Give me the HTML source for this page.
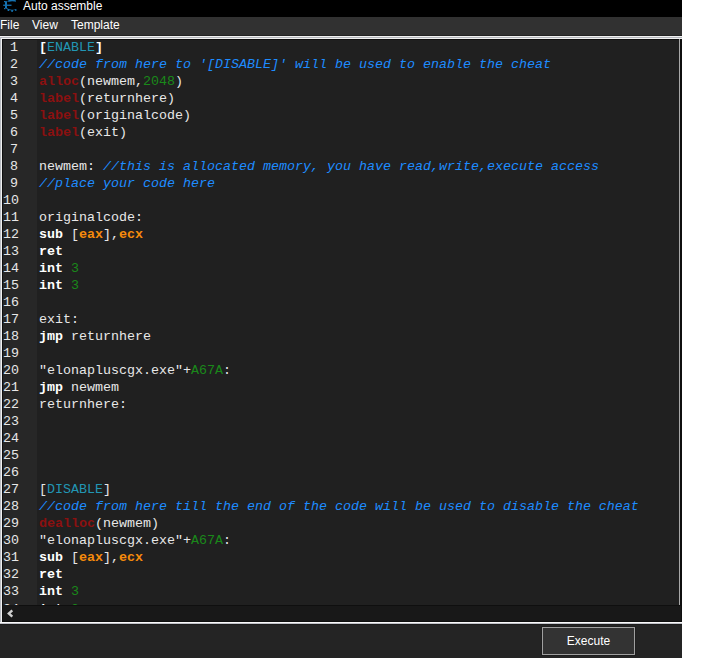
<!DOCTYPE html>
<html><head><meta charset="utf-8">
<style>
*{margin:0;padding:0;box-sizing:border-box}
html,body{width:705px;height:658px;overflow:hidden;background:#fff}
body{position:relative;font-family:"Liberation Sans",sans-serif}
.a{position:absolute}
#title{left:0;top:0;width:682px;height:17px;background:#000;color:#fff;font-size:12px}
#title span{position:absolute;left:23px;top:-1px;line-height:14px}
#icon{position:absolute;left:0;top:0;width:20px;height:16px}
#menu{left:0;top:17px;width:682px;height:19px;background:#313131;color:#fff;font-size:12px}
#menu span{position:absolute;top:1px;line-height:15px}
#edit{left:3px;top:40px;width:676px;height:565px;background:#202020;overflow:hidden}
#gutter{position:absolute;left:0;top:0;width:34px;height:100%;background:#272727}
.mono{font-family:"Liberation Mono",monospace;font-size:13.333px;line-height:17px;white-space:pre}
#nums{position:absolute;left:0;width:15px;top:-1px;color:#e8e8e8;text-align:right}
#code{position:absolute;left:36px;top:-1px;color:#e8e8e8}
#bottom{left:0;top:624px;width:682px;height:34px;background:#242424}
#btn{left:542px;top:627px;width:93px;height:28px;border:1px solid #a0a0a0;background:#333;color:#fff;font-size:12px;text-align:center;line-height:26px}
.b{font-weight:bold;color:#fff}
.bb{font-weight:bold;color:#fff}
.k{font-weight:bold;color:#8b1010}
.c{font-style:italic;color:#1e8cff}
.s{color:#2296b4}
.n{color:#1a881a}
.r{font-weight:bold;color:#f58a0c}
</style></head><body>
<div id="title" class="a"><svg id="icon" viewBox="0 0 20 16">
<g fill="#1572b0">
<path d="M7 1.5 Q8 0 11 -0.5 L15.5 -0.5 L16 1.8 L14.6 1.6 Q12 0.6 9 1.8 Z"/>
<rect x="5" y="1.2" width="2" height="7"/>
<rect x="3.2" y="4.6" width="8.3" height="1.3"/>
<rect x="4" y="1" width="1.5" height="1.2"/>
<rect x="4" y="8" width="1.5" height="1.2"/>
<path d="M6 7.6 Q9 9.8 12 9.8 Q14.3 9.8 15.5 8.9 L15.8 9.5 Q14 10.5 12 10.5 Q8.5 10.5 6 8.6 Z"/>
<rect x="7.6" y="9.2" width="1.6" height="1.8"/>
<rect x="11.3" y="10" width="1.6" height="1.9"/>
<rect x="15" y="9.2" width="1.5" height="1.6"/>
</g></svg><span>Auto assemble</span></div>
<div id="menu" class="a"><span style="left:0">File</span><span style="left:32px">View</span><span style="left:71px">Template</span></div>
<div class="a" style="left:0;top:35px;width:682px;height:1px;background:#232323"></div>
<div class="a" style="left:0;top:36px;width:682px;height:588px;background:#f0f0f0"></div>
<div class="a" style="left:0;top:37px;width:682px;height:1px;background:#b4b6bc"></div>
<div class="a" style="left:0;top:37px;width:1px;height:585px;background:#b9bcc2"></div>
<div class="a" style="left:2px;top:39px;width:680px;height:583px;background:#0f0f0f"></div>
<div id="edit" class="a"><div id="gutter"></div>
<div id="nums" class="mono">1
2
3
4
5
6
7
8
9
10
11
12
13
14
15
16
17
18
19
20
21
22
23
24
25
26
27
28
29
30
31
32
33
<span style="position:relative;top:1px">34</span></div><div id="code" class="mono"><span class="bb">[</span><span class="s">ENABLE</span><span class="bb">]</span>
<span class="c">//code from here to '[DISABLE]' will be used to enable the cheat</span>
<span class="k">alloc</span>(newmem,<span class="n">2048</span>)
<span class="k">label</span>(returnhere)
<span class="k">label</span>(originalcode)
<span class="k">label</span>(exit)

newmem: <span class="c">//this is allocated memory, you have read,write,execute access</span>
<span class="c">//place your code here</span>

originalcode:
<span class="b">sub</span> [<span class="r">eax</span>],<span class="r">ecx</span>
<span class="b">ret</span>
<span class="b">int</span> <span class="n">3</span>
<span class="b">int</span> <span class="n">3</span>

exit:
<span class="b">jmp</span> returnhere

"elonapluscgx.exe"+<span class="n">A67A</span>:
<span class="b">jmp</span> newmem
returnhere:




[<span class="s">DISABLE</span>]
<span class="c">//code from here till the end of the code will be used to disable the cheat</span>
<span class="k">dealloc</span>(newmem)
"elonapluscgx.exe"+<span class="n">A67A</span>:
<span class="b">sub</span> [<span class="r">eax</span>],<span class="r">ecx</span>
<span class="b">ret</span>
<span class="b">int</span> <span class="n">3</span>
<span style="position:relative;top:1px"><span class="b">int</span> <span class="n">3</span></span></div>
</div>
<div class="a" style="left:679px;top:39px;width:1px;height:566px;background:#a8a8a8"></div>
<div class="a" style="left:3px;top:605px;width:16px;height:1px;background:#181818"></div>
<div class="a" style="left:3px;top:606px;width:678px;height:15px;background:#181818"></div>
<svg class="a" style="left:0;top:606px" width="20" height="15"><path d="M12.3 4.3 L8.8 7.5 L12.3 10.7" fill="none" stroke="#d0d0d0" stroke-width="2.4"/></svg>
<div class="a" style="left:0;top:622px;width:682px;height:1px;background:#fafafa"></div>
<div class="a" style="left:0;top:623px;width:682px;height:1px;background:#c0c2c8"></div>
<div id="bottom" class="a"></div>
<div class="a" style="left:0;top:624px;width:682px;height:1px;background:#1c1c1c"></div>
<div class="a" style="left:541px;top:626px;width:95px;height:30px;background:#1e1e1e"></div>
<div id="btn" class="a">Execute</div>
</body></html>
